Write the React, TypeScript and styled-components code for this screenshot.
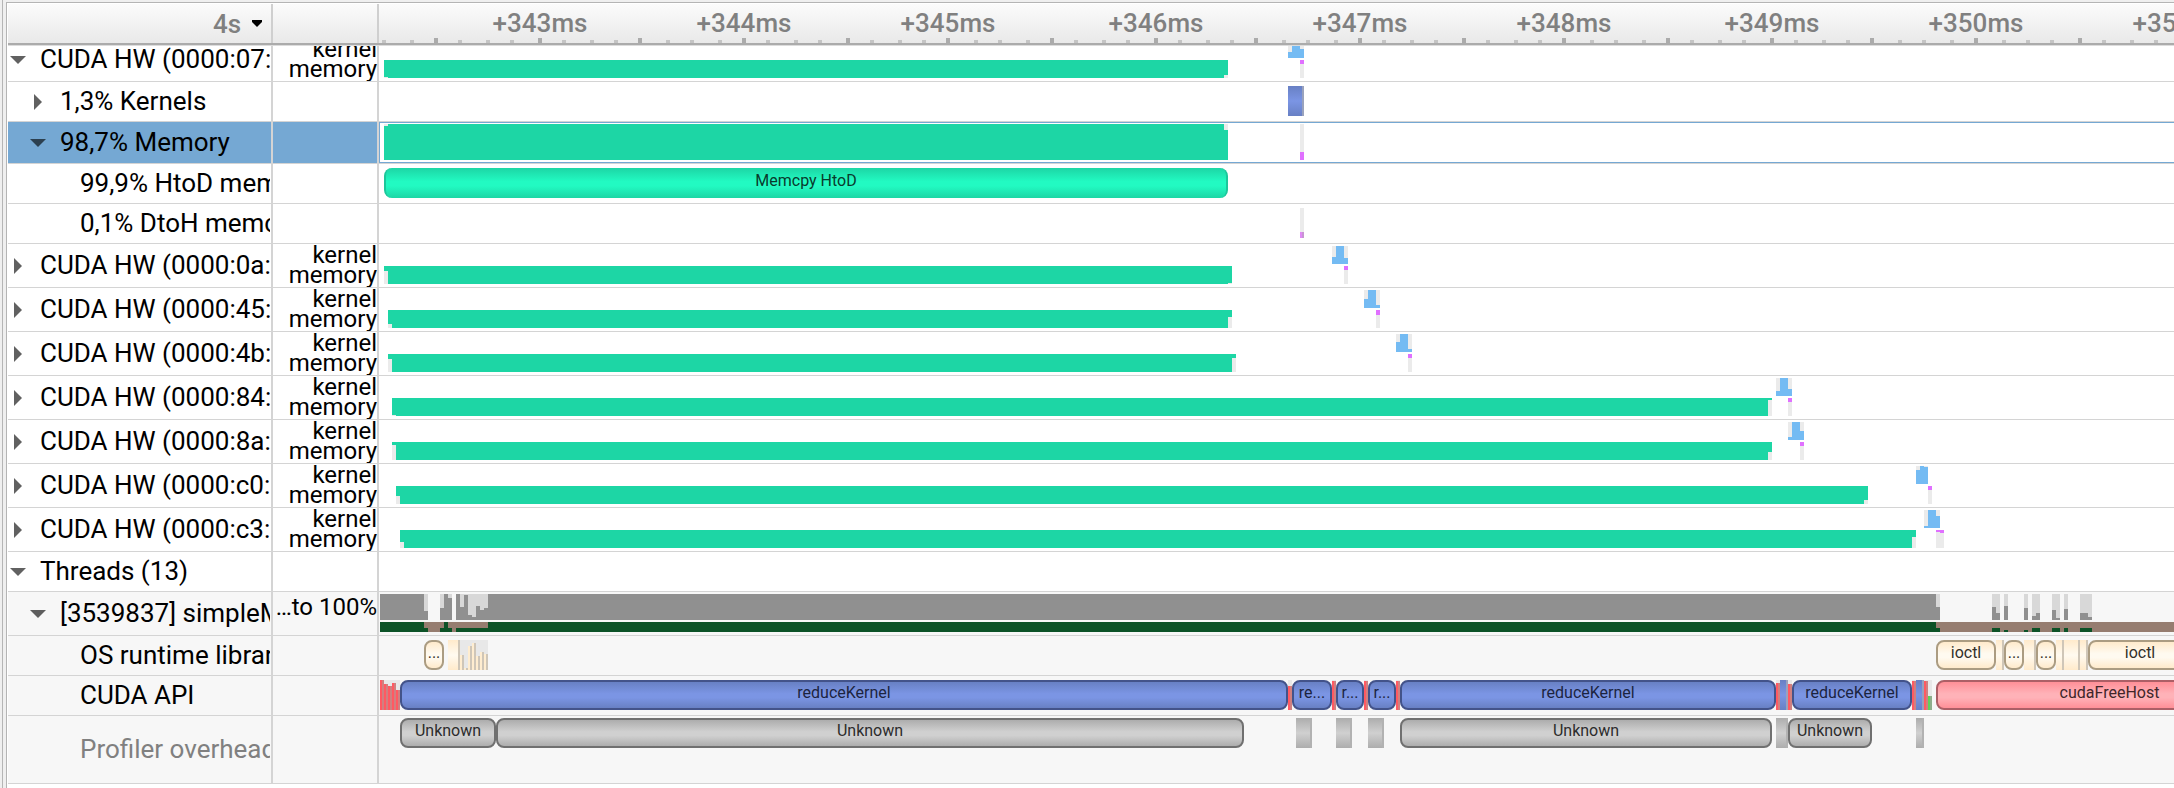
import React from "react";
import styled, { createGlobalStyle, css } from "styled-components";

const GlobalStyle = createGlobalStyle`
  * { box-sizing: border-box; }
  html, body, #root { height: 100%; margin: 0; }
  body { background: #efefef; font-family: Roboto, "Liberation Sans", sans-serif; color: #000; }
`;

/* Timeline x coordinate at the left edge of the track area. */
const ORIGIN = 379;
const TRACK_WIDTH = 2400;
const BUCKET = 4;

const Window = styled.div`
  min-height: 100%;
  display: flex;
  padding: 2px 0 0 6px;
  background: linear-gradient(90deg, #efefef 2px, #b5b5b5 2px, #b5b5b5 3px, #efefef 3px);
`;

const Panel = styled.div`
  flex: 1;
  min-width: 0;
  display: flex;
  flex-direction: column;
  padding: 1px 0 0 1px;
  background: #fff;
  border-top: 1px solid #b4b4b4;
  border-left: 1px solid #b4b4b4;
`;

const columns = css`
  display: grid;
  grid-template-columns: 265px 106px minmax(0, 1fr);
`;

const Header = styled.header`
  ${columns}
  height: 41px;
  margin-bottom: 1px;
  flex: none;
  background: linear-gradient(#fbfbfb, #e9e9e9);
  border-bottom: 2px solid #ababab;
  box-shadow: 0 1px #dcdcdc;
`;

const HeaderCell = styled.div`
  border-right: 2px solid #cfcfcf;
  display: flex;
  align-items: center;
  justify-content: flex-end;
  padding-right: 9px;
  gap: 10px;
  color: #808080;
`;

const ScaleSelect = styled.select`
  appearance: none;
  border: 0;
  margin: 0;
  padding: 0;
  background: transparent;
  color: inherit;
  font: 500 26px/32px Roboto, sans-serif;
`;

const Ruler = styled.div`
  position: relative;
  overflow: hidden;
`;

const RulerLabel = styled.span<{ $x: number }>`
  position: absolute;
  top: 4px;
  left: ${(p) => p.$x}px;
  width: 120px;
  margin-left: -60px;
  text-align: center;
  font-size: 26px;
  font-weight: 500;
  line-height: 30px;
  color: #808080;
`;

const Drawing = styled.svg`
  position: absolute;
  inset: 0 auto auto 0;
  display: block;
`;

const RowList = styled.main`
  flex: 1;
`;

const Row = styled.div<{ $h: number; $shade?: boolean; $selected?: boolean }>`
  ${columns}
  height: ${(p) => p.$h}px;
  overflow: hidden;
  border-bottom: 1px solid #d4d4d4;
  background: ${(p) => (p.$shade ? "#f7f7f7" : "#fff")};
  --side: ${(p) => (p.$selected ? "#75a8d3" : "transparent")};
  --frame: ${(p) => (p.$selected ? "#75a8d3" : "transparent")};
`;

const NameCell = styled.div<{ $level: number; $muted?: boolean; $scrolled: number }>`
  display: flex;
  align-items: center;
  margin-top: ${(p) => -p.$scrolled}px;
  padding-left: ${(p) => p.$level * 20}px;
  padding-bottom: 2px;
  border-right: 2px solid #d4d4d4;
  background: var(--side);
  background-clip: padding-box;
  color: ${(p) => (p.$muted ? "#808080" : "#000")};
`;

const Expander = styled.button`
  flex: none;
  width: 20px;
  height: 18px;
  margin-right: 12px;
  padding: 2px 0 0;
  border: 0;
  background: transparent;
  color: rgba(0, 0, 0, 0.62);
  svg { display: block; margin: 0 auto; }
`;

const Spacer = styled.span`
  flex: none;
  width: 32px;
`;

const Name = styled.span`
  flex: 1;
  min-width: 0;
  margin-right: 1px;
  overflow: hidden;
  white-space: nowrap;
  font-size: 26px;
  line-height: 32px;
`;

const LegendCell = styled.div`
  display: flex;
  flex-direction: column;
  align-items: flex-end;
  border-right: 2px solid #d4d4d4;
  background: var(--side);
  background-clip: padding-box;
  font-size: 24px;
  line-height: 20px;
  white-space: nowrap;
`;

const UtilLegend = styled.span`
  padding-top: 5px;
`;

const DeviceLegend = styled.div`
  padding-top: 1px;
  text-align: right;
`;

const Track = styled.div`
  position: relative;
  overflow: hidden;
  &::after {
    content: "";
    position: absolute;
    inset: 0 -1px 0 0;
    border: 1px solid var(--frame);
  }
`;

/* Shifts a chart up when its row is partly scrolled under the header. */
const Scrolled = styled.div<{ $by: number }>`
  margin-top: ${(p) => -p.$by}px;
  position: relative;
`;

type Tone = "blue" | "gray" | "cream" | "pink" | "mint";

const tones: Record<Tone, { edge: string; dark: string; light: string; text: string }> = {
  blue: { edge: "#43538a", dark: "#6880c4", light: "#7b95e4", text: "#1c2440" },
  gray: { edge: "#707070", dark: "#adadad", light: "#d0d0d0", text: "#2c2c2c" },
  cream: { edge: "#ab9c82", dark: "#ffeacb", light: "#fffaf0", text: "#333029" },
  pink: { edge: "#ac5f66", dark: "#ff8f97", light: "#ffb2b8", text: "#40262a" },
  mint: { edge: "#1cc79b", dark: "#1dd6a5", light: "#22fac2", text: "#0a3a2d" },
};

const Event = styled.div<{ $x: number; $w: number; $y: number; $tone: Tone }>`
  position: absolute;
  left: ${(p) => p.$x - ORIGIN}px;
  top: ${(p) => p.$y}px;
  width: ${(p) => p.$w}px;
  height: 30px;
  border: 2px solid ${(p) => tones[p.$tone].edge};
  ${(p) => p.$tone === "mint" && "border-width: 0 2px;"}
  border-radius: 8px;
  background: linear-gradient(
    ${(p) => tones[p.$tone].dark},
    ${(p) => tones[p.$tone].light} 45%,
    ${(p) => tones[p.$tone].light} 60%,
    ${(p) => tones[p.$tone].dark}
  );
  color: ${(p) => tones[p.$tone].text};
  font-size: 16px;
  line-height: ${(p) => (p.$tone === "mint" ? 26 : 22)}px;
  text-align: center;
  white-space: nowrap;
  overflow: hidden;
`;

const Sliver = styled.div<{ $x: number; $w: number; $y: number; $tone: Tone; $end: string }>`
  position: absolute;
  left: ${(p) => p.$x - ORIGIN}px;
  top: ${(p) => p.$y}px;
  width: ${(p) => p.$w}px;
  height: 30px;
  border-right: 2px solid ${(p) => p.$end};
  background: linear-gradient(
    ${(p) => tones[p.$tone].dark},
    ${(p) => tones[p.$tone].light} 50%,
    ${(p) => tones[p.$tone].dark}
  );
`;

type EventData = [x: number, end: number, tone: Tone, label: string];
type SliverData = [x: number, end: number, tone: Tone];

const sliverEnd: Record<Tone, string> = {
  blue: "#99a2bd",
  gray: "#b2b2b2",
  cream: "#cfc6b8",
  pink: "#c08a8e",
  mint: "#1cc79b",
};

const Events = ({ y, items, slivers = [] }: { y: number; items: EventData[]; slivers?: SliverData[] }) => (
  <>
    {slivers.map(([x, end, tone]) => (
      <Sliver key={x} $x={x} $w={end - x} $y={y} $tone={tone} $end={sliverEnd[tone]} />
    ))}
    {items.map(([x, end, tone, label]) => (
      <Event key={x} $x={x} $w={end - x} $y={y} $tone={tone}>
        {label}
      </Event>
    ))}
  </>
);

const Canvas = ({ height, children }: { height: number; children: React.ReactNode }) => (
  <Drawing width={TRACK_WIDTH} height={height} viewBox={`${ORIGIN} 0 ${TRACK_WIDTH} ${height}`} shapeRendering="crispEdges" aria-hidden>
    {children}
  </Drawing>
);

const Rect = ({ x, y, w, h, fill }: { x: number; y: number; w: number; h: number; fill: string }) => (
  <rect x={x} y={y} width={w} height={h} fill={fill} />
);

const MINT = "#1dd6a5";
const SKY = "#74bbf3";
const VIOLET = "#e070ff";
const IDLE = "#ebebeb";

type Device = {
  bus: string;
  start: number;
  startLoad: number;
  end: number;
  endLoad: number;
  kernelAt: number;
  kernels: number[];
  copyAt: number;
  copies: number[];
};

const devices: Device[] = [
  { bus: "07", start: 384, startLoad: 17, end: 1228, endLoad: 15, kernelAt: 1288, kernels: [6, 18, 18, 9], copyAt: 1300, copies: [4] },
  { bus: "0a", start: 384, startLoad: 5, end: 1232, endLoad: 17, kernelAt: 1332, kernels: [7, 18, 18, 6], copyAt: 1344, copies: [4] },
  { bus: "45", start: 388, startLoad: 14, end: 1232, endLoad: 7, kernelAt: 1364, kernels: [9, 18, 18, 3], copyAt: 1376, copies: [5] },
  { bus: "4b", start: 388, startLoad: 5, end: 1236, endLoad: 4, kernelAt: 1396, kernels: [10, 18, 18, 3], copyAt: 1408, copies: [4] },
  { bus: "84", start: 392, startLoad: 17, end: 1772, endLoad: 2, kernelAt: 1776, kernels: [5, 18, 18, 7], copyAt: 1788, copies: [4] },
  { bus: "8a", start: 392, startLoad: 3, end: 1772, endLoad: 10, kernelAt: 1788, kernels: [3, 18, 18, 9], copyAt: 1800, copies: [4] },
  { bus: "c0", start: 396, startLoad: 10, end: 1868, endLoad: 14, kernelAt: 1916, kernels: [14, 18, 17], copyAt: 1928, copies: [4] },
  { bus: "c3", start: 400, startLoad: 12, end: 1916, endLoad: 7, kernelAt: 1924, kernels: [2, 18, 18, 12], copyAt: 1936, copies: [2, 3] },
];

const DeviceChart = ({ d }: { d: Device }) => (
  <Canvas height={43}>
    {d.kernels.map((h, i) => (
      <g key={i}>
        <Rect x={d.kernelAt + i * BUCKET} y={2} w={BUCKET} h={18} fill={IDLE} />
        <Rect x={d.kernelAt + i * BUCKET} y={20 - h} w={BUCKET} h={h} fill={SKY} />
      </g>
    ))}
    <Rect x={d.start} y={22} w={d.end - d.start} h={18} fill={IDLE} />
    <Rect x={d.start} y={22} w={BUCKET} h={d.startLoad} fill={MINT} />
    <Rect x={d.start + BUCKET} y={22} w={d.end - d.start - 2 * BUCKET} h={18} fill={MINT} />
    <Rect x={d.end - BUCKET} y={22} w={BUCKET} h={d.endLoad} fill={MINT} />
    {d.copies.map((h, i) => (
      <g key={i}>
        <Rect x={d.copyAt + i * BUCKET} y={22} w={BUCKET} h={18} fill={IDLE} />
        <Rect x={d.copyAt + i * BUCKET} y={22} w={BUCKET} h={h} fill={VIOLET} />
      </g>
    ))}
  </Canvas>
);

/* CPU utilisation: bucket start -> height in pixels out of 26. */
const load: [number, number][] = [
  [424, 9], [440, 12], [444, 26], [448, 22], [456, 26], [460, 13], [464, 25], [468, 5], [472, 3],
  [476, 14], [480, 10], [484, 12], [1936, 13], [1992, 13], [1996, 7], [2004, 14], [2024, 12],
  [2032, 4], [2036, 7], [2052, 10], [2056, 2], [2064, 11], [2080, 7], [2084, 7], [2088, 3],
];

/* Running state over a mostly blocked thread: start, end, height out of 10. */
const running: [number, number, number][] = [
  [380, 424, 10], [424, 428, 4], [440, 444, 4], [444, 448, 10], [448, 452, 4], [456, 488, 4],
  [488, 1936, 10], [1936, 1940, 4], [1992, 2000, 4], [2004, 2008, 2], [2024, 2028, 2],
  [2032, 2040, 4], [2052, 2060, 4], [2064, 2068, 4], [2080, 2092, 4],
];

const ThreadChart = () => (
  <Canvas height={43}>
    <Rect x={380} y={2} w={44} h={26} fill="#909090" />
    <Rect x={488} y={2} w={1448} h={26} fill="#909090" />
    {load.map(([x, h]) => (
      <g key={x}>
        <Rect x={x} y={2} w={BUCKET} h={26} fill="#d8d8d8" />
        <Rect x={x} y={28 - h} w={BUCKET} h={h} fill="#909090" />
      </g>
    ))}
    <Rect x={380} y={30} w={TRACK_WIDTH} h={10} fill="#967d70" />
    {running.map(([x, end, h]) => (
      <Rect key={x} x={x} y={40 - h} w={end - x} h={h} fill="#0c5227" />
    ))}
  </Canvas>
);

/* Short calls: start -> height out of 30. */
const runtimeCalls: [number, number][] = [[460, 15], [464, 2], [468, 24], [472, 27], [476, 14], [480, 18], [484, 16]];
const copyCalls: [number, number][] = [
  [380, 30], [384, 26], [388, 24], [392, 27], [396, 20], [1288, 24], [1332, 29], [1364, 29],
  [1396, 29], [1776, 27], [1788, 26], [1912, 29], [1924, 29],
];

const Spikes = ({ items, fill, end }: { items: [number, number][]; fill: string; end: string }) => (
  <>
    {items.map(([x, h]) => (
      <g key={x}>
        <Rect x={x} y={4} w={BUCKET} h={30} fill="#e8e8e8" />
        <Rect x={x} y={34 - h} w={2} h={h} fill={fill} />
        <Rect x={x + 2} y={34 - h} w={2} h={h} fill={end} />
      </g>
    ))}
  </>
);

/* Ruler marks fall on the same buckets as the chart columns. */
const markAt = (k: number) => BUCKET * Math.round((384.8 + 25.67 * k) / BUCKET);

const ticks = Array.from({ length: 80 }, (_, k) => ({ x: markAt(k) - 2, major: k % 4 === 2 }));

const rulerLabels = Array.from({ length: 10 }, (_, i) => ({ ms: 342 + i, x: markAt(8 * i - 2) - ORIGIN }));

const Arrow = ({ open }: { open: boolean }) =>
  open ? (
    <svg width="16" height="8" viewBox="0 0 16 8" fill="currentColor" aria-hidden><path d="M0 0h16L8 8z" /></svg>
  ) : (
    <svg width="8" height="16" viewBox="0 0 8 16" fill="currentColor" aria-hidden><path d="M0 0v16l8-8z" /></svg>
  );

type TreeRowProps = {
  name: string;
  h?: number;
  level?: number;
  open?: boolean;
  leaf?: boolean;
  muted?: boolean;
  shade?: boolean;
  selected?: boolean;
  legend?: React.ReactNode;
  scrolled?: number;
  children?: React.ReactNode;
};

const TreeRow = ({ name, h = 40, level = 0, open = false, leaf, muted, shade, selected, legend, scrolled = 0, children }: TreeRowProps) => (
  <Row $h={h} $shade={shade} $selected={selected}>
    <NameCell $level={level} $muted={muted} $scrolled={scrolled}>
      {leaf ? <Spacer /> : (
        <Expander type="button" aria-expanded={open} aria-label={`${open ? "Collapse" : "Expand"} ${name}`}>
          <Arrow open={open} />
        </Expander>
      )}
      <Name>{name}</Name>
    </NameCell>
    <LegendCell>{scrolled ? <Scrolled $by={scrolled}>{legend}</Scrolled> : legend}</LegendCell>
    <Track>{scrolled ? <Scrolled $by={scrolled}>{children}</Scrolled> : children}</Track>
  </Row>
);

const deviceLegend = (
  <DeviceLegend>
    <div>kernel</div>
    <div>memory</div>
  </DeviceLegend>
);

export default function App() {
  const [first, ...rest] = devices;
  return (
    <>
      <GlobalStyle />
      <Window>
        <Panel>
          <Header>
            <HeaderCell>
              <ScaleSelect aria-label="Time scale" defaultValue="4s">
                <option>4s</option>
              </ScaleSelect>
              <svg width="10" height="7" viewBox="0 0 10 7" aria-hidden><path d="M0 0h10v2L5 7 0 2z" fill="#000" /></svg>
            </HeaderCell>
            <HeaderCell />
            <Ruler>
              <Canvas height={40}>
                {ticks.map((t) => (
                  <Rect key={t.x} x={t.x} y={t.major ? 34 : 36} w={4} h={t.major ? 5 : 3} fill={t.major ? "#ababab" : "#c4c4c4"} />
                ))}
              </Canvas>
              {rulerLabels.map((l) => (
                <RulerLabel key={l.ms} $x={l.x}>+{l.ms}ms</RulerLabel>
              ))}
            </Ruler>
          </Header>
          <RowList>
            <TreeRow name={`CUDA HW (0000:${first.bus}:00.0)`} h={36} open legend={deviceLegend} scrolled={8}>
              <DeviceChart d={first} />
            </TreeRow>
            <TreeRow name="1,3% Kernels" level={1}>
              <Events y={4} items={[]} slivers={[[1288, 1304, "blue"]]} />
            </TreeRow>
            <TreeRow name="98,7% Memory" h={42} level={1} open selected>
              <Canvas height={41}>
                <Rect x={1224} y={2} w={4} h={36} fill={IDLE} />
                <Rect x={384} y={2} w={4} h={36} fill={IDLE} />
                <Rect x={384} y={4} w={4} h={34} fill={MINT} />
                <Rect x={388} y={2} w={836} h={36} fill={MINT} />
                <Rect x={1224} y={8} w={4} h={30} fill={MINT} />
                <Rect x={1300} y={2} w={4} h={36} fill={IDLE} />
                <Rect x={1300} y={30} w={4} h={8} fill={VIOLET} />
              </Canvas>
            </TreeRow>
            <TreeRow name="99,9% HtoD memcpy" level={2} leaf>
              <Events y={4} items={[[384, 1228, "mint", "Memcpy HtoD"]]} />
            </TreeRow>
            <TreeRow name="0,1% DtoH memcpy" level={2} leaf>
              <Canvas height={39}>
                <Rect x={1300} y={4} w={4} h={24} fill={IDLE} />
                <Rect x={1300} y={28} w={2} h={6} fill="#e08af5" />
                <Rect x={1302} y={28} w={2} h={6} fill="#c894d3" />
              </Canvas>
            </TreeRow>
            {rest.map((d) => (
              <TreeRow key={d.bus} name={`CUDA HW (0000:${d.bus}:00.0)`} h={44} legend={deviceLegend}>
                <DeviceChart d={d} />
              </TreeRow>
            ))}
            <TreeRow name="Threads (13)" open />
            <TreeRow name="[3539837] simpleMultiGPU" h={44} level={1} open shade legend={<UtilLegend>…to 100%</UtilLegend>}>
              <ThreadChart />
            </TreeRow>
            <TreeRow name="OS runtime libraries" level={2} leaf shade>
              <Canvas height={39}>
                <Spikes items={runtimeCalls} fill="#ffedd0" end="#cfc6b8" />
              </Canvas>
              <Events
                y={4}
                slivers={[
                  [448, 460, "cream"], [1996, 2004, "cream"], [2024, 2036, "cream"],
                  [2056, 2064, "cream"], [2064, 2080, "cream"], [2080, 2088, "cream"],
                ]}
                items={[
                  [424, 444, "cream", "..."], [1936, 1996, "cream", "ioctl"], [2004, 2024, "cream", "..."],
                  [2036, 2056, "cream", "..."], [2088, 2192, "cream", "ioctl"],
                ]}
              />
            </TreeRow>
            <TreeRow name="CUDA API" level={2} leaf shade>
              <Canvas height={39}>
                <Spikes items={copyCalls} fill="#ff5a62" end="#d08080" />
                <Spikes items={[[1928, 14]]} fill="#5fd25a" end="#8fae8c" />
              </Canvas>
              <Events
                y={4}
                slivers={[[1780, 1788, "blue"], [1916, 1924, "blue"]]}
                items={[
                  [400, 1288, "blue", "reduceKernel"], [1292, 1332, "blue", "re..."], [1336, 1364, "blue", "r..."],
                  [1368, 1396, "blue", "r..."], [1400, 1776, "blue", "reduceKernel"], [1792, 1912, "blue", "reduceKernel"],
                  [1936, 2283, "pink", "cudaFreeHost"],
                ]}
              />
            </TreeRow>
            <TreeRow name="Profiler overhead" h={68} level={2} leaf muted shade>
              <Events
                y={2}
                slivers={[
                  [1296, 1312, "gray"], [1336, 1352, "gray"], [1368, 1384, "gray"],
                  [1776, 1788, "gray"], [1916, 1924, "gray"],
                ]}
                items={[
                  [400, 496, "gray", "Unknown"], [496, 1244, "gray", "Unknown"],
                  [1400, 1772, "gray", "Unknown"], [1788, 1872, "gray", "Unknown"],
                ]}
              />
            </TreeRow>
          </RowList>
        </Panel>
      </Window>
    </>
  );
}
